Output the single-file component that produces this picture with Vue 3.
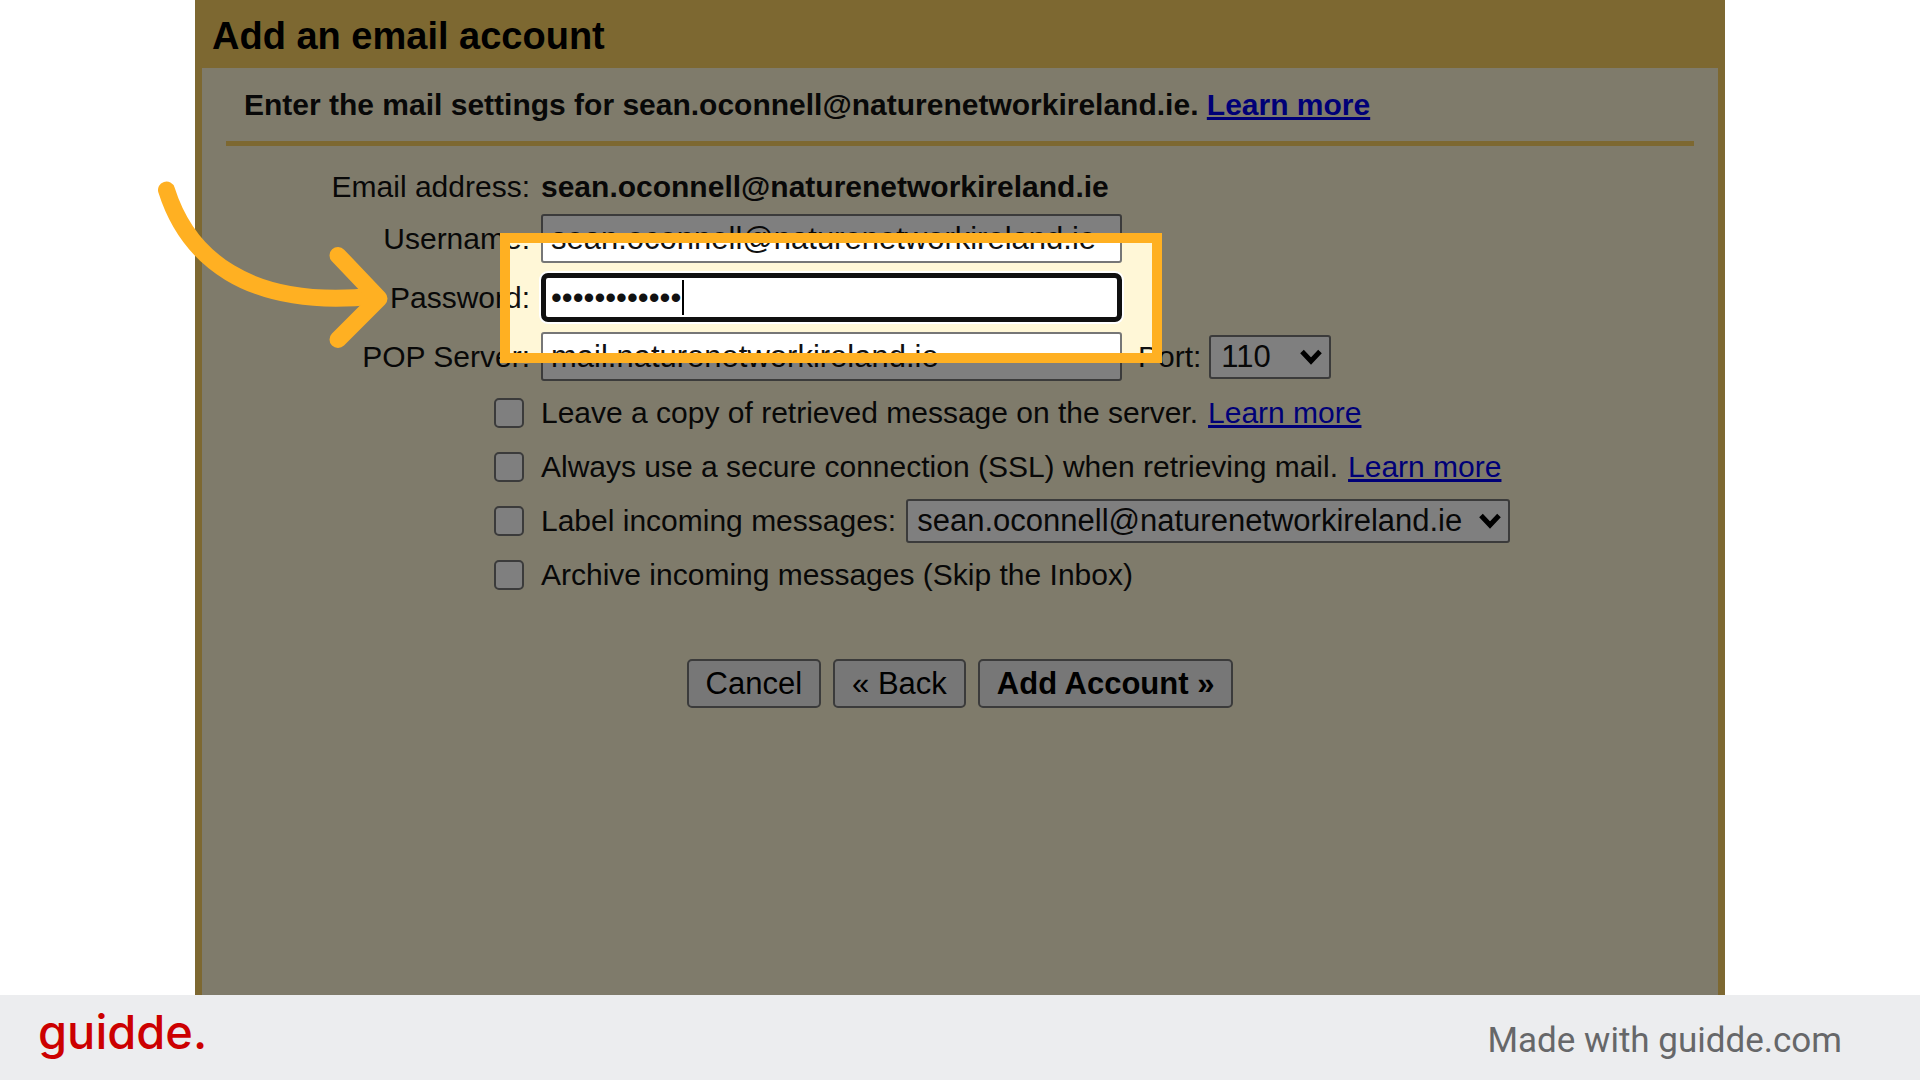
<script setup>
import { ref } from 'vue'

const account = 'sean.oconnell@naturenetworkireland.ie'
const username = ref(account)
const password = ref('secretsecret')
const server = ref('mail.naturenetworkireland.ie')
const port = ref('110')
const label = ref(account)
const options = ref([
  { id: 'keep', text: 'Leave a copy of retrieved message on the server.', link: true, checked: false },
  { id: 'ssl', text: 'Always use a secure connection (SSL) when retrieving mail.', link: true, checked: false },
  { id: 'label', text: 'Label incoming messages:', select: true, checked: false },
  { id: 'archive', text: 'Archive incoming messages (Skip the Inbox)', checked: false },
])
</script>

<template>
  <div class="page">
    <main class="stage">
      <div class="panel">
        <h1 class="title">Add an email account</h1>
        <form class="body" @submit.prevent>
          <h2 class="intro">
            Enter the mail settings for {{ account }}. <a href="#">Learn more</a>
          </h2>
          <div class="rows">
            <div class="row row-text">
              <span class="name">Email address:</span>
              <strong>{{ account }}</strong>
            </div>
            <div class="row row-field">
              <label class="name" for="username">Username:</label>
              <input id="username" v-model="username" class="field" type="text" />
            </div>
            <div class="row row-field">
              <label class="name" for="password">Password:</label>
              <div class="focus-wrap">
                <input id="password" v-model="password" class="field focused" type="password" />
                <span class="caret"></span>
              </div>
            </div>
            <div class="row row-field">
              <label class="name" for="server">POP Server:</label>
              <div class="server">
                <input id="server" v-model="server" class="field" type="text" />
                <label class="port-name" for="port">Port:</label>
                <div class="select-wrap">
                  <select id="port" v-model="port" class="select select-port">
                    <option>110</option>
                    <option>995</option>
                  </select>
                  <svg class="chevron" viewBox="0 0 22 16"><path d="M2 2.500L11 12L20 2.500" /></svg>
                </div>
              </div>
            </div>
            <div v-for="o in options" :key="o.id" class="row row-check">
              <input :id="o.id" v-model="o.checked" class="check" type="checkbox" />
              <div class="option">
                <label :for="o.id">{{ o.text }}</label>
                <a v-if="o.link" href="#">Learn more</a>
                <div v-if="o.select" class="select-wrap">
                  <select v-model="label" class="select select-label" aria-label="Label">
                    <option>{{ account }}</option>
                  </select>
                  <svg class="chevron" viewBox="0 0 22 16"><path d="M2 2.500L11 12L20 2.500" /></svg>
                </div>
              </div>
            </div>
          </div>
          <div class="actions">
            <button type="button">Cancel</button>
            <button type="button">« Back</button>
            <button type="submit" class="primary">Add Account »</button>
          </div>
        </form>
        <div class="dim"><div class="spotlight"></div></div>
        <svg class="arrow" viewBox="150 175 250 180">
          <path d="M166.500 190C187 255 245 310 375 296" />
          <path d="M338 255.500L379 298.500L338 339.500" />
        </svg>
      </div>
    </main>
    <footer class="footer">
      <span class="logo">guidde.</span>
      <span class="made">Made with guidde.com</span>
    </footer>
  </div>
</template>

<style>
body {
  margin: 0;
}
</style>

<style scoped>
* {
  box-sizing: border-box;
}
.page {
  display: flex;
  flex-direction: column;
  min-height: 100vh;
  background: #fff;
  font-family: "Liberation Sans", Arial, sans-serif;
  font-size: 30px;
  line-height: 34px;
  color: #111;
}
.stage {
  flex: 1;
  display: flex;
  padding: 0 195px;
}
.panel {
  position: relative;
  flex: 1;
  display: flex;
  flex-direction: column;
  background: #fad163;
  padding: 0 7px;
}
.title {
  margin: 0;
  padding: 4px 10px 0;
  font-size: 38px;
  line-height: 64px;
  color: #000;
}
.body {
  flex: 1;
  background: #fff7d7;
  padding: 0 24px 40px;
}
.intro {
  margin: 0;
  padding: 0 18px;
  font-size: 30px;
  line-height: 73px;
  border-bottom: 5px solid #fad163;
  white-space: nowrap;
}
a {
  color: #0000ee;
  text-decoration: underline;
}
.rows {
  display: flex;
  flex-direction: column;
  gap: 10px;
  padding-top: 24px;
}
.row {
  display: grid;
  grid-template-columns: 304px 1fr;
  column-gap: 11px;
  align-items: center;
  white-space: nowrap;
}
.row-text {
  height: 34px;
}
.row-field {
  height: 49px;
}
.row-check {
  height: 44px;
}
.name {
  text-align: right;
}
.field {
  display: block;
  width: 581px;
  height: 49px;
  margin: 0;
  padding: 0 8px;
  border: 2px solid #767676;
  border-radius: 3px;
  background: #fff;
  color: #111;
  font: inherit;
  font-size: 31px;
  outline: none;
}
.focus-wrap {
  position: relative;
}
.focused {
  padding: 0 5px;
  border: 5px solid #101010;
  border-radius: 7px;
  box-shadow: 0 0 0 2px #fff;
}
.caret {
  position: absolute;
  left: 141px;
  top: 7px;
  width: 2px;
  height: 35px;
  background: #000;
}
.server {
  display: flex;
  align-items: center;
}
.port-name {
  margin: 0 8px 0 16px;
}
.select-wrap {
  position: relative;
  display: flex;
}
.select {
  appearance: none;
  height: 44px;
  margin: 0;
  border: 2px solid #767676;
  border-radius: 3px;
  background: #fff;
  color: #111;
  font: inherit;
  font-size: 31px;
}
.select-port {
  width: 122px;
  padding: 0 10px;
}
.select-label {
  width: 604px;
  padding: 0 9px;
}
.chevron {
  position: absolute;
  right: 9px;
  top: 14px;
  width: 22px;
  height: 16px;
  fill: none;
  stroke: #000;
  stroke-width: 5;
  pointer-events: none;
}
.check {
  appearance: none;
  justify-self: end;
  width: 30px;
  height: 30px;
  margin: 0 6px 0 0;
  border: 2px solid #767676;
  border-radius: 5px;
  background: #fff;
}
.check:checked {
  background: #1a73e8;
}
.option {
  display: flex;
  align-items: center;
  gap: 10px;
}
.actions {
  display: flex;
  justify-content: center;
  gap: 12px;
  margin-top: 62px;
}
.actions button {
  height: 49px;
  padding: 0 17px;
  border: 2px solid #767676;
  border-radius: 5px;
  background: #efefef;
  color: #000;
  font: inherit;
  font-size: 31px;
}
.actions .primary {
  font-weight: bold;
}
.dim {
  position: absolute;
  inset: 0;
  overflow: hidden;
  pointer-events: none;
}
.spotlight {
  position: absolute;
  left: 305px;
  top: 233px;
  width: 662px;
  height: 130px;
  border: 10px solid #ffb022;
  box-shadow: 0 0 0 4000px rgba(0, 0, 0, 0.5);
}
.arrow {
  position: absolute;
  left: -45px;
  top: 175px;
  width: 250px;
  height: 180px;
  fill: none;
  stroke: #ffb022;
  stroke-width: 17;
  stroke-linecap: round;
  stroke-linejoin: round;
  pointer-events: none;
}
.footer {
  display: flex;
  justify-content: space-between;
  align-items: center;
  height: 85px;
  padding: 0 78px 0 38px;
  background: #ecedef;
}
.logo {
  font-family: Inter, sans-serif;
  font-size: 47px;
  font-weight: 500;
  line-height: 72px;
  padding-bottom: 12px;
  color: #cc0000;
}
.made {
  font-family: Roboto, sans-serif;
  font-size: 35px;
  line-height: 40px;
  padding-top: 6px;
  color: #666769;
}
</style>
